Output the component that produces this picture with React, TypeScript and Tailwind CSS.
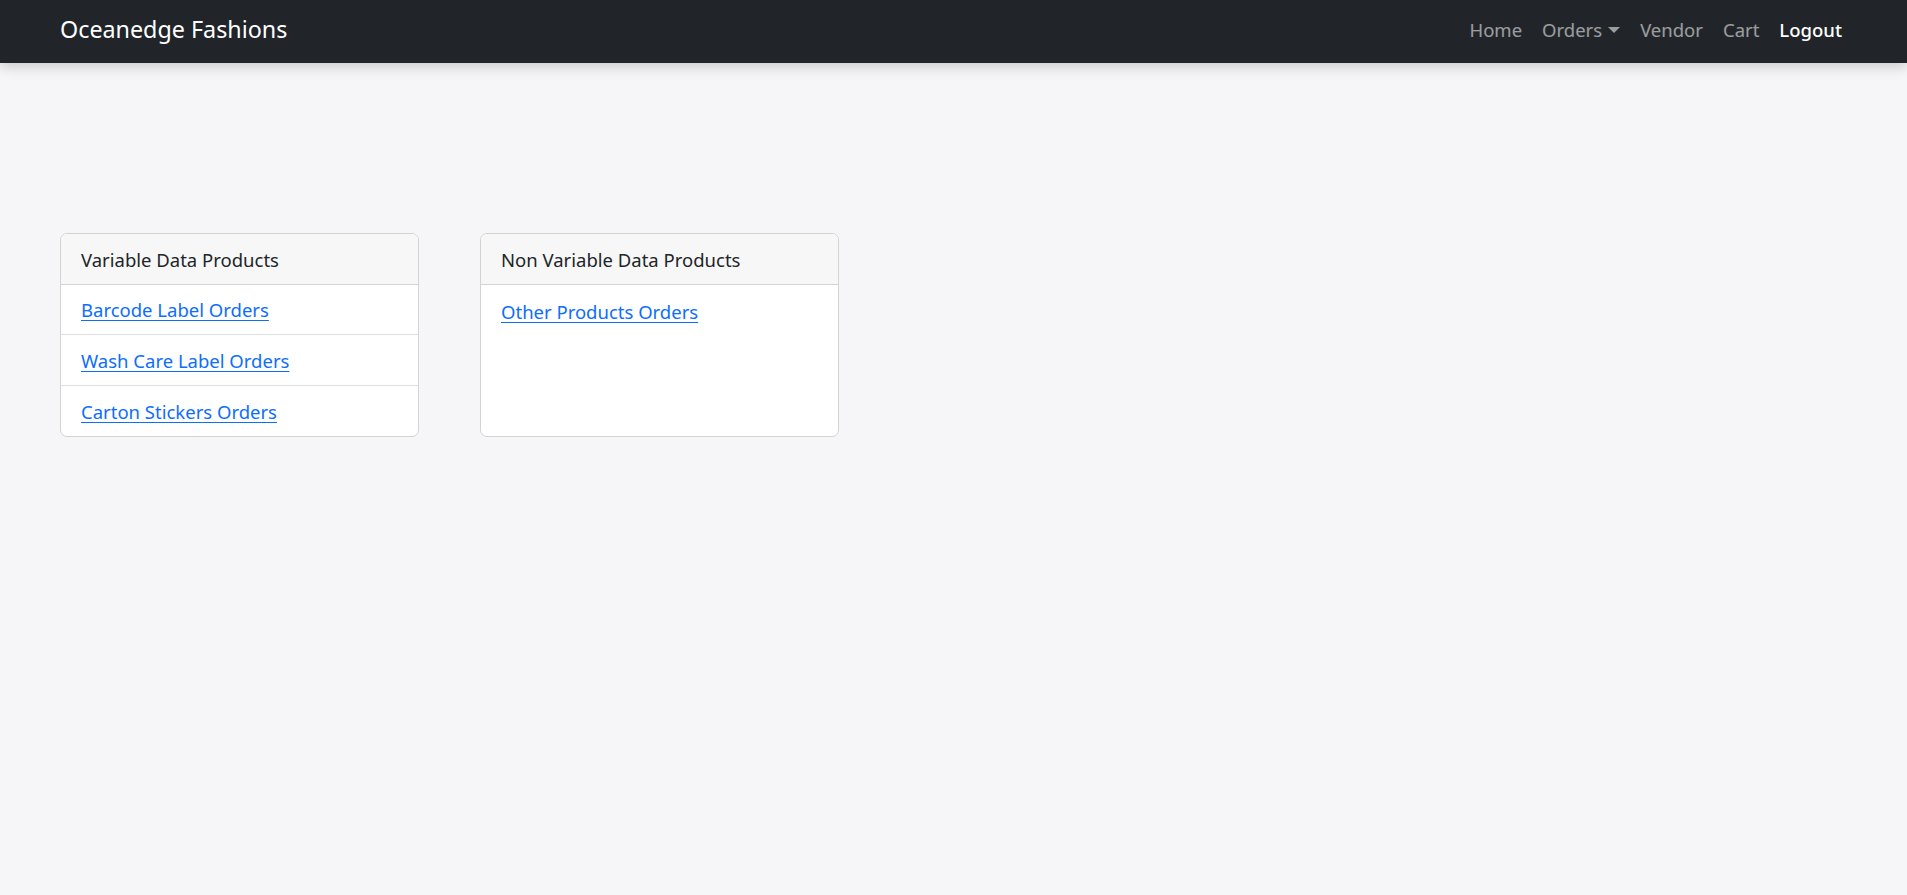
import React from "react";

const font = { fontFamily: '"Noto Sans", "Open Sans", sans-serif' };

const variableLinks = ["Barcode Label Orders", "Wash Care Label Orders", "Carton Stickers Orders"];
const otherLinks = ["Other Products Orders"];

function Card({ title, links }: { title: string; links: string[] }) {
  return (
    <div className="w-[359px] h-[204px] flex flex-col rounded-[7px] border border-[#d3d3d5] bg-white overflow-hidden">
      <div className="h-[51px] flex items-center px-5 pt-[2px] bg-[#f7f7f7] border-b border-[#d3d3d5] text-[18.5px] text-[#212529]">
        {title}
      </div>
      {links.map((l, i) => (
        <div
          key={l}
          className={`h-[51px] flex items-center px-5 pt-[2px] ${i < links.length - 1 ? "border-b border-[#dfdfe1]" : ""}`}
        >
          <a href="#" className="text-[18.5px] text-[#0d6efd] underline underline-offset-[3px]">
            {l}
          </a>
        </div>
      ))}
    </div>
  );
}

export default function App() {
  return (
    <div className="min-h-[895px] bg-[#f6f6f8]" style={font}>
      <nav className="h-[63px] bg-[#212529] flex items-center justify-between pl-[60px] pr-[55px] pb-[5px] shadow-[0_4px_12px_rgba(0,0,0,0.18)] relative">
        <span className="text-[23.3px] text-white">Oceanedge Fashions</span>
        <div className="flex items-center text-[18.5px] pt-[1px]">
          <a className="px-[10px] text-white/55">Home</a>
          <a className="px-[10px] text-white/55 flex items-center">
            Orders
            <span className="ml-[6px] w-0 h-0 border-l-[6px] border-r-[6px] border-t-[6px] border-l-transparent border-r-transparent border-t-white/55" />
          </a>
          <a className="px-[10px] text-white/55">Vendor</a>
          <a className="px-[10px] text-white/55">Cart</a>
          <a className="px-[10px] text-white font-medium">Logout</a>
        </div>
      </nav>
      <div className="flex gap-[61px] pl-[60px] pt-[170px]">
        <Card title="Variable Data Products" links={variableLinks} />
        <Card title="Non Variable Data Products" links={otherLinks} />
      </div>
    </div>
  );
}
